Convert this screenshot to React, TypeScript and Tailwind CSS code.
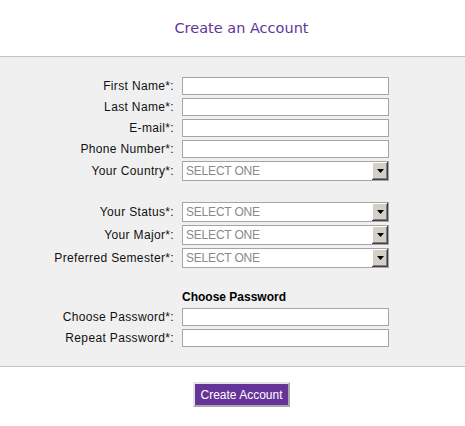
import { FC } from "react";

const TextRow: FC<{ label: string }> = ({ label }) => (
  <div className="flex items-center h-[18px] mb-[3px]">
    <div className="w-[176px] text-right pr-[2px] tracking-[0.35px]">{label}</div>
    <div className="ml-[6px] w-[207px] h-[18px] bg-white border border-[#a5a5a5]" />
  </div>
);

const SelectRow: FC<{ label: string }> = ({ label }) => (
  <div className="flex items-center h-[20px] mb-[3px]">
    <div className="w-[176px] text-right pr-[2px] tracking-[0.35px]">{label}</div>
    <div className="ml-[6px] w-[207px] h-[20px] bg-white border border-[#a5a5a5] flex items-center justify-between">
      <span className="pl-[3px] text-[#8a8a8a] tracking-[-0.2px]">SELECT ONE</span>
      <div className="w-[16px] h-[18px] bg-[#d4d0c8] flex items-center justify-center shadow-[inset_-1px_-1px_#404040,inset_1px_1px_#ffffff,inset_-2px_-2px_#808080]">
        <svg width="7" height="4" viewBox="0 0 7 4">
          <path d="M0 0h7L3.5 4z" fill="#000" />
        </svg>
      </div>
    </div>
  </div>
);

const App: FC = () => {
  return (
    <div className="w-[465px] h-[426px] bg-white text-[12px] text-[#111] font-['Liberation_Sans',Arial,sans-serif]">
      <div className="h-[56px] flex items-center justify-center pl-[18px] pt-[2px]">
        <h1 className="text-[14.5px] text-[#663399] font-['DejaVu_Sans',Verdana,sans-serif]">Create an Account</h1>
      </div>
      <div className="h-px bg-[#c4c4c4]" />
      <div className="h-[309px] bg-[#f0f0f0] pt-[20px]">
        <TextRow label="First Name*:" />
        <TextRow label="Last Name*:" />
        <TextRow label="E-mail*:" />
        <TextRow label="Phone Number*:" />
        <SelectRow label="Your Country*:" />
        <div className="h-[18px]" />
        <SelectRow label="Your Status*:" />
        <SelectRow label="Your Major*:" />
        <SelectRow label="Preferred Semester*:" />
        <div className="h-[17px]" />
        <div className="flex items-center h-[20px] -mt-[1px] mb-[1px]">
          <div className="w-[176px]" />
          <div className="ml-[6px] font-bold text-black">Choose Password</div>
        </div>
        <TextRow label="Choose Password*:" />
        <TextRow label="Repeat Password*:" />
      </div>
      <div className="h-px bg-[#c4c4c4]" />
      <div className="pt-[15px] pl-[193px]">
        <button className="w-[97px] h-[25px] bg-[#663399] text-white text-[12px] border-2 border-t-[#e4e4e4] border-l-[#e4e4e4] border-b-[#a8a8a8] border-r-[#a8a8a8]">
          Create Account
        </button>
      </div>
    </div>
  );
};

export default App;
